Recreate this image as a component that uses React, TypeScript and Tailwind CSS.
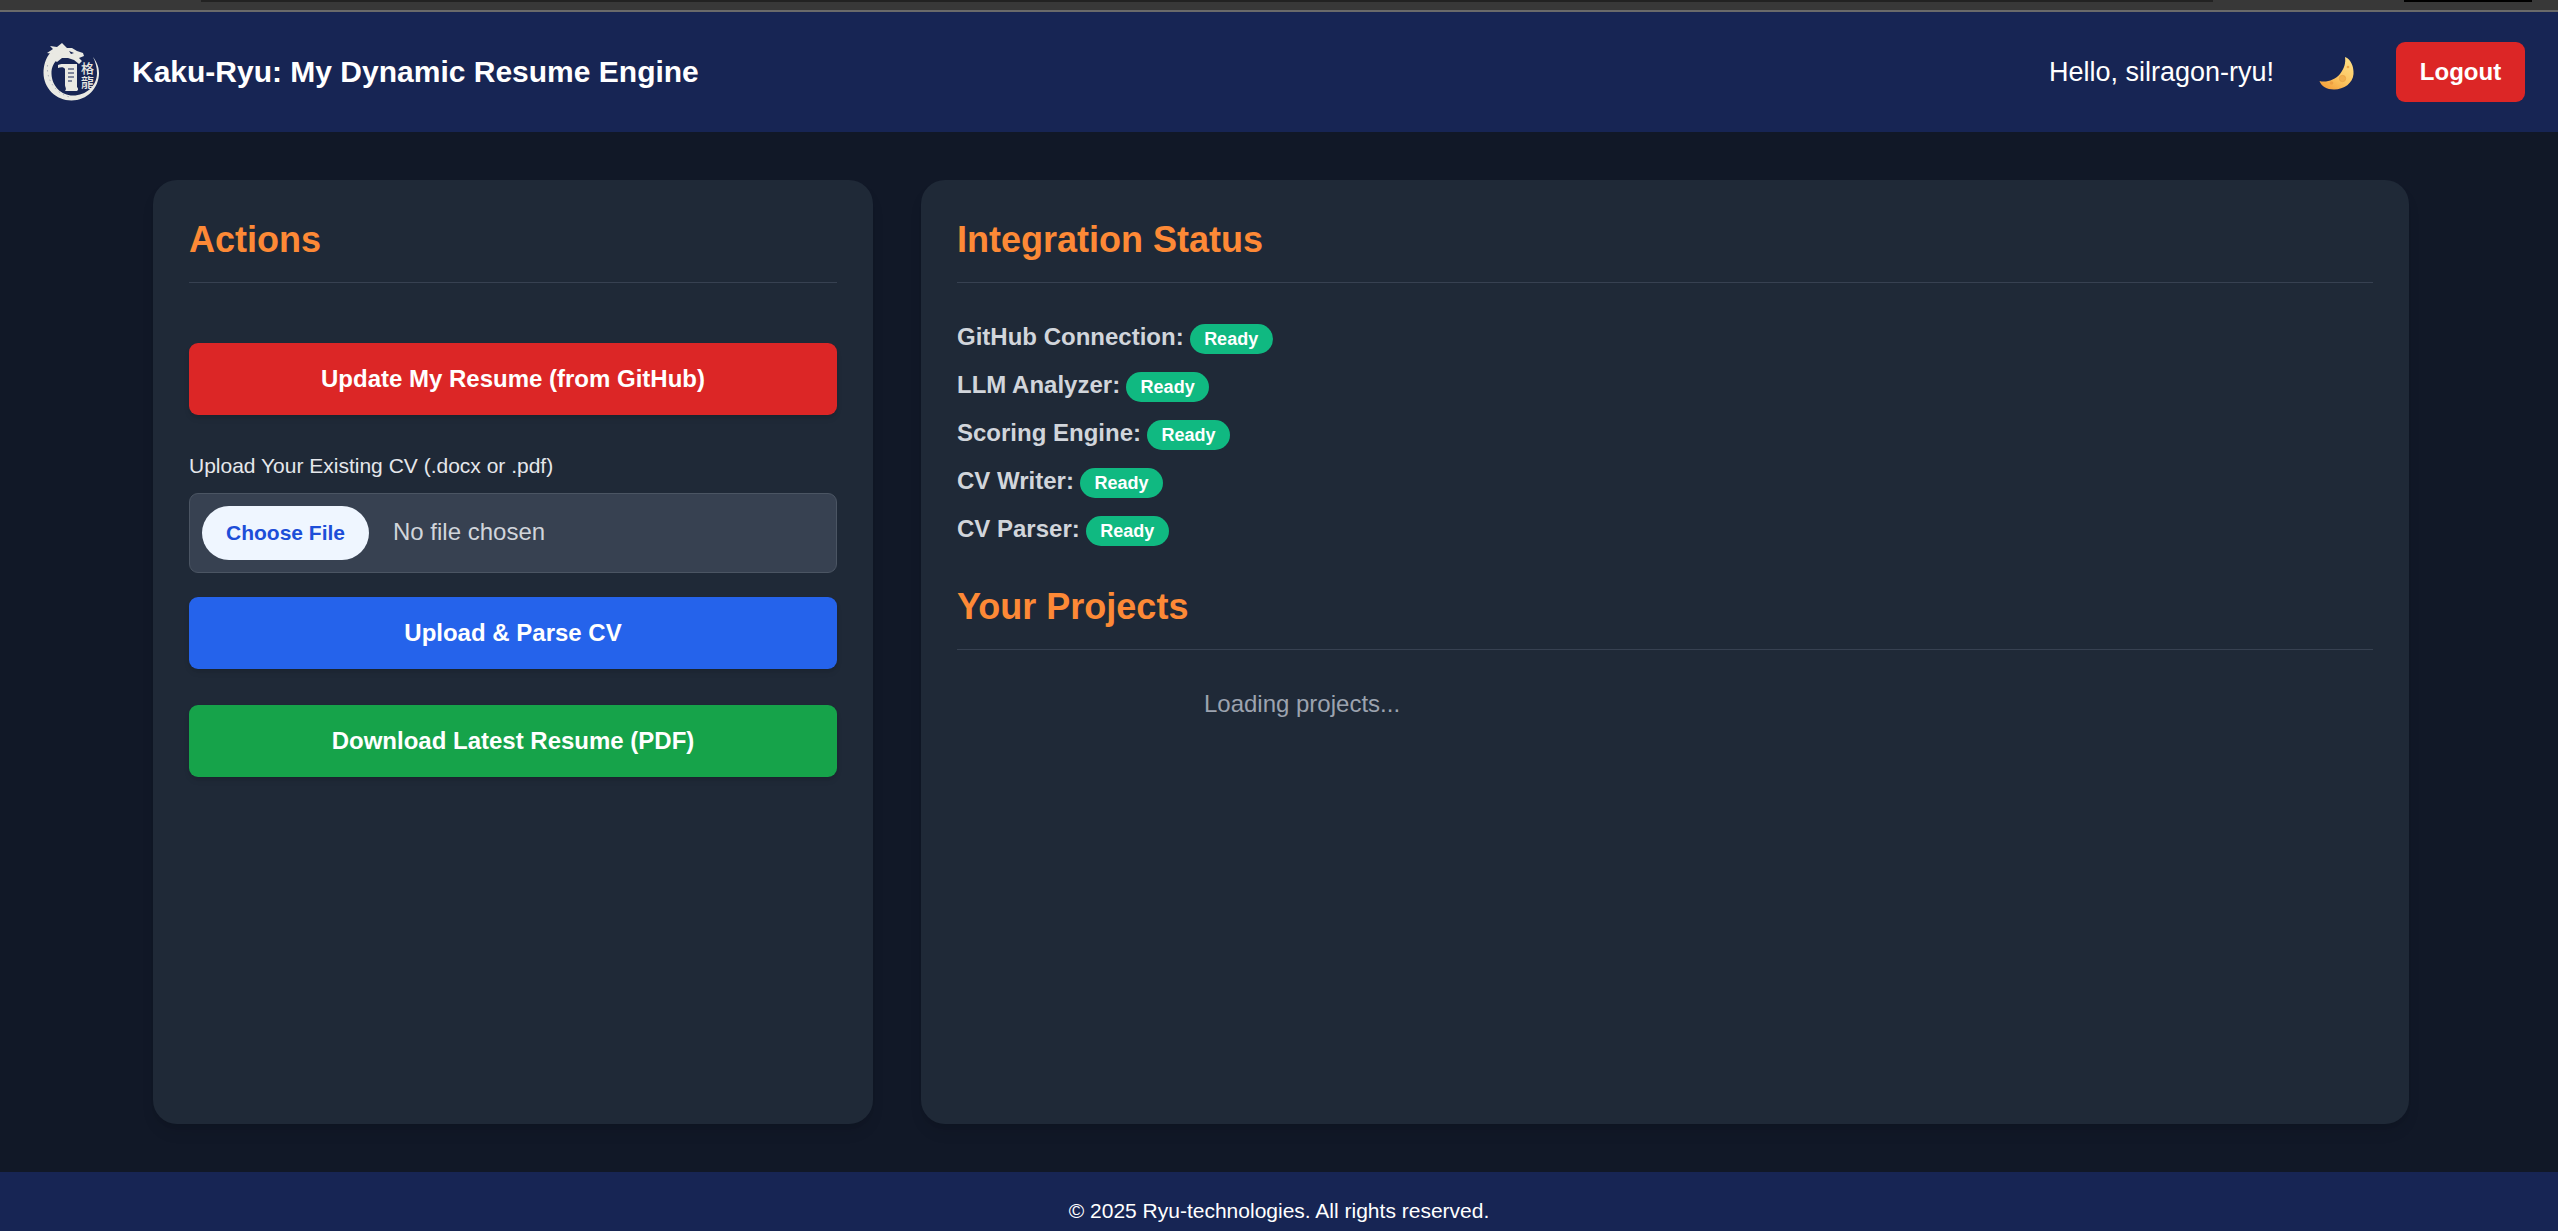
import React from "react";

const integrations = [
  "GitHub Connection:",
  "LLM Analyzer:",
  "Scoring Engine:",
  "CV Writer:",
  "CV Parser:",
];

const Logo = () => (
  <svg viewBox="0 0 70 70" className="h-[70px] w-[70px] shrink-0" aria-label="Kaku-Ryu logo">
    {/* ring body, heavy on the left, tapering to the right */}
    <path
      d="M15 15 C9 21 7.5 30 7.5 36 C7.5 51 20 63.5 35.5 63.5 C51 63.5 63 51 63 36 C63 29 60 24 57 20 C59.5 25 61 30 61 36 C61 49 50 58.5 37 58.5 C25 58.5 16 49 15.5 37 C15.2 30 18 25 23 21 Z"
      fill="#e9e9e3"
    />
    <path
      d="M11.5 28 C10 44 21 58 36 60.5"
      fill="none"
      stroke="#172554"
      strokeWidth="0.6"
      strokeDasharray="1.5 3.5"
      opacity="0.5"
    />
    {/* head and horns */}
    <path
      d="M26 6 L31 11 L36 11 L41 14 L47 16 L48 19 L43 21 L46 24 L43 27 L38 23 L32 21 L26 21 L21 25 L15 21 L17 17 L11 16 L17 12 L14 9 L21 10 Z"
      fill="#e9e9e3"
    />
    <path d="M33 14 L38 16 L35 17 Z" fill="#172554" />
    {/* scroll */}
    <path
      d="M22 28 C25 26.5 27 27 29 27 L41 27 L41 50 C43 52 42 54 40 54 L29 54 C31 52 29 50 29 48 L29 32 C28 30 25 30 22 31 Z"
      fill="#e9e9e3"
    />
    <path d="M32 32 H38 M32 36 H38 M32 40 H38 M32 44 H36" stroke="#172554" strokeWidth="1.1" />
    <text
      x="51.5"
      y="36"
      textAnchor="middle"
      fontSize="13"
      fontWeight="500"
      fill="#e8e8e2"
      fontFamily="'Noto Sans CJK TC', sans-serif"
    >
      格
    </text>
    <text
      x="51.5"
      y="50"
      textAnchor="middle"
      fontSize="13"
      fontWeight="500"
      fill="#e8e8e2"
      fontFamily="'Noto Sans CJK TC', sans-serif"
    >
      龍
    </text>
  </svg>
);

const Moon = () => (
  <svg viewBox="0 0 50 45" className="h-[45px] w-[50px]" aria-label="Toggle theme">
    <defs>
      <linearGradient id="moon" x1="0.8" y1="0" x2="0.2" y2="1">
        <stop offset="0" stopColor="#ffdf85" />
        <stop offset="0.6" stopColor="#fcc45f" />
        <stop offset="1" stopColor="#f59f3a" />
      </linearGradient>
    </defs>
    <path
      d="M35 7 C41 9 44 17 43.5 24 C43 33 34 39.5 24 39.5 C17 39.5 11 36 9.5 31 C16 33 25 30 30 24 C34 19 36 13 35 7 Z"
      fill="url(#moon)"
    />
    <circle cx="32.5" cy="28.5" r="3.2" fill="#f2b14f" stroke="#e8a03f" strokeWidth="0.6" />
    <circle cx="21.5" cy="33" r="1.8" fill="#ee9f42" />
    <circle cx="38" cy="17" r="1.3" fill="#eda545" />
  </svg>
);

const SectionTitle = ({ title }: { title: string }) => (
  <h2 className="h-[67px] border-b border-[#374151] pb-[18px] text-[36px] leading-[48px] font-bold text-[#fd8936]">
    {title}
  </h2>
);

const ActionButton = ({ label, color }: { label: string; color: string }) => (
  <button
    className={`h-[72px] w-full rounded-[9px] text-[24px] font-bold text-white shadow-md ${color}`}
  >
    {label}
  </button>
);

const App = () => {
  return (
    <div className="flex h-screen flex-col overflow-hidden bg-[#111827] font-['Liberation_Sans',Arial,sans-serif] text-white">
      <div className="h-[12px] shrink-0 border-b-2 border-[#6a6a6a] bg-[#383838]">
        <div className="flex h-[2px]">
          <div className="ml-[201px] w-[2012px] bg-[#222222]" />
          <div className="ml-[191px] w-[128px] bg-black" />
        </div>
      </div>

      <header className="flex h-[120px] shrink-0 items-center justify-between bg-[#172554] pr-[33px] pl-[36px]">
        <div className="flex items-center gap-[26px]">
          <Logo />
          <h1 className="-mt-[2px] text-[30px] font-bold">Kaku-Ryu: My Dynamic Resume Engine</h1>
        </div>
        <div className="flex items-center gap-[36px]">
          <span className="text-[27px]">Hello, silragon-ryu!</span>
          <button className="flex items-center">
            <Moon />
          </button>
          <button className="h-[60px] w-[129px] rounded-[9px] bg-[#dc2626] text-[24px] font-bold">
            Logout
          </button>
        </div>
      </header>

      <main className="grid flex-1 grid-cols-3 gap-[48px] pt-[48px] pr-[149px] pb-[48px] pl-[153px]">
        <section className="rounded-[24px] bg-[#1f2937] p-[36px] shadow-lg">
          <SectionTitle title="Actions" />
          <div className="mt-[60px]">
            <ActionButton label="Update My Resume (from GitHub)" color="bg-[#dc2626]" />
          </div>
          <label className="mt-[36px] mb-[12px] block text-[21px] leading-[30px] text-[#e5e7eb]">
            Upload Your Existing CV (.docx or .pdf)
          </label>
          <input
            type="file"
            className="mb-[24px] block h-[80px] w-full rounded-[9px] border border-[#4b5563] bg-[#374151] p-[12px] text-[24px] text-[#d1d5db] file:mr-[24px] file:h-[54px] file:w-[167px] file:rounded-full file:border-0 file:bg-[#eff6ff] file:text-[21px] file:font-semibold file:text-[#1d4ed8]"
          />
          <ActionButton label="Upload & Parse CV" color="bg-[#2563eb]" />
          <div className="mt-[36px]">
            <ActionButton label="Download Latest Resume (PDF)" color="bg-[#16a34a]" />
          </div>
        </section>

        <section className="col-span-2 rounded-[24px] bg-[#1f2937] p-[36px] shadow-lg">
          <SectionTitle title="Integration Status" />
          <ul className="mt-[36px] mb-[36px] flex flex-col gap-[12px]">
            {integrations.map((name) => (
              <li key={name} className="flex h-[36px] items-center gap-[6px]">
                <span className="text-[24px] font-bold text-[#d1d5db]">{name}</span>
                <span className="mt-[4px] flex h-[30px] w-[83px] items-center justify-center rounded-full bg-[#10b981] text-[18px] font-bold">
                  Ready
                </span>
              </li>
            ))}
          </ul>
          <SectionTitle title="Your Projects" />
          <div className="mt-[36px] grid grid-cols-2 gap-[36px]">
            <p className="text-center text-[24px] leading-[36px] text-[#9ca3af]">Loading projects...</p>
          </div>
        </section>
      </main>

      <footer className="h-[59px] shrink-0 bg-[#172554] pt-[24px] text-center text-[21px] leading-[30px]">
        © 2025 Ryu-technologies. All rights reserved.
      </footer>
    </div>
  );
};

export default App;
